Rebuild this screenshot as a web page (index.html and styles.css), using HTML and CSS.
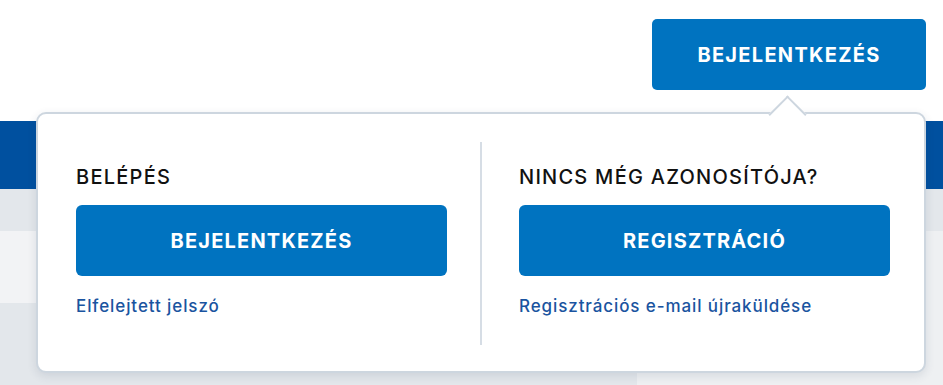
FILE: index.html
```html
<!DOCTYPE html>
<html lang="hu">
<head>
<meta charset="utf-8">
<title>Bejelentkezés</title>
<link rel="stylesheet" href="styles.css">
</head>
<body>
<div class="page">
  <header class="top">
    <button class="btn btn-top">BEJELENTKEZÉS</button>
  </header>
  <nav class="navbar"></nav>
  <div class="content">
    <div class="col-left">
      <div class="band band-a"></div>
      <div class="band band-b"></div>
      <div class="band band-c"></div>
    </div>
    <div class="col-right">
      <div class="band band-a"></div>
      <div class="band band-d"></div>
    </div>
  </div>

  <div class="popup">
    <span class="arrow"></span>
    <section class="pane">
      <h2 class="pane-title">BELÉPÉS</h2>
      <button class="btn btn-wide">BEJELENTKEZÉS</button>
      <a class="pane-link" href="#">Elfelejtett jelszó</a>
    </section>
    <div class="divider"></div>
    <section class="pane">
      <h2 class="pane-title">NINCS MÉG AZONOSÍTÓJA?</h2>
      <button class="btn btn-wide">REGISZTRÁCIÓ</button>
      <a class="pane-link" href="#">Regisztrációs e-mail újraküldése</a>
    </section>
  </div>
</div>
</body>
</html>
```

FILE: styles.css
```css
* { box-sizing: border-box; }

html, body {
  margin: 0;
  padding: 0;
  background: #ffffff;
}

body {
  width: 943px;
  height: 385px;
  overflow: hidden;
  font-family: "Inter", "Noto Sans", "Liberation Sans", sans-serif;
}

.page {
  position: relative;
  width: 943px;
  height: 385px;
  display: flex;
  flex-direction: column;
}

.top {
  height: 121px;
  display: flex;
  justify-content: flex-end;
  align-items: flex-start;
  padding: 19px 17px 0 0;
  background: #ffffff;
}

.navbar {
  height: 68px;
  background: #00509f;
}

.content {
  flex: 1;
  display: flex;
}

.col-left {
  width: 637px;
  display: flex;
  flex-direction: column;
}

.col-right {
  flex: 1;
  display: flex;
  flex-direction: column;
}

.band-a { height: 42px; background: #e3e7eb; }
.band-b { height: 72px; background: #f2f3f5; }
.band-c { flex: 1; background: #e3e7eb; }
.band-d { flex: 1; background: #eef0f2; }

.btn {
  border: 0;
  margin: 0;
  padding: 0;
  background: #0073c0;
  color: #ffffff;
  font-family: inherit;
  font-weight: 700;
  cursor: pointer;
  display: flex;
  align-items: center;
  justify-content: center;
}

.btn-top {
  width: 274px;
  height: 71px;
  border-radius: 5px;
  font-size: 20px;
  letter-spacing: 1.3px;
}

.popup {
  position: absolute;
  left: 36px;
  top: 112px;
  width: 890px;
  height: 261px;
  background: #ffffff;
  border: 2px solid #cdd6df;
  border-radius: 10px;
  box-shadow: 0 3px 10px rgba(40, 60, 90, 0.12);
  display: flex;
  align-items: stretch;
  padding: 28px 34px 26px 38px;
}

.arrow {
  position: absolute;
  top: -13px;
  left: 736px;
  width: 27px;
  height: 27px;
  background: #ffffff;
  border-top: 2px solid #cdd6df;
  border-left: 2px solid #cdd6df;
  transform: rotate(45deg);
}

.pane {
  width: 371px;
  display: flex;
  flex-direction: column;
  padding-top: 23px;
}

.divider {
  width: 2px;
  background: #d6dde5;
  margin: 0 37px 0 33px;
}

.pane-title {
  margin: 0;
  font-size: 20px;
  line-height: 24px;
  font-weight: 550;
  color: #111111;
  letter-spacing: 1.25px;
}

.btn-wide {
  width: 371px;
  height: 71px;
  margin-top: 16px;
  border-radius: 6px;
  font-size: 20px;
  letter-spacing: 1.2px;
}

.pane-link {
  margin-top: 19px;
  font-size: 17px;
  line-height: 22px;
  font-weight: 500;
  color: #1a54a0;
  text-decoration: none;
  letter-spacing: 0.9px;
}
```
